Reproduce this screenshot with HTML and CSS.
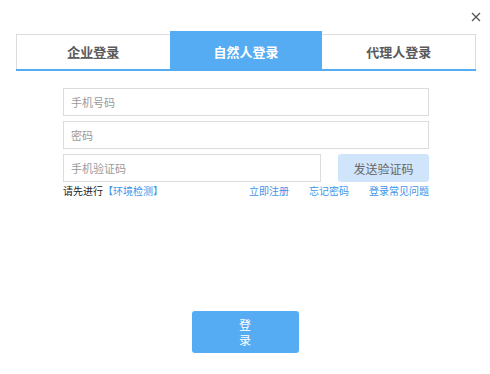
FILE: index.html
```html
<!DOCTYPE html>
<html lang="zh">
<head>
<meta charset="utf-8">
<title>登录</title>
<link rel="stylesheet" href="styles.css">
</head>
<body>
<div class="dialog">
  <button class="close" aria-label="关闭">
    <svg width="10" height="10" viewBox="0 0 10 10"><path d="M1 1L9 9M9 1L1 9" stroke="#555" stroke-width="1.3" fill="none"/></svg>
  </button>
  <div class="tabs">
    <div class="tab tab-first"><span class="hover">企业登录</span></div>
    <div class="tab active">自然人登录</div>
    <div class="tab tab-last">代理人登录</div>
  </div>
  <form class="form">
    <input class="field" type="text" placeholder="手机号码">
    <input class="field" type="password" placeholder="密码">
    <div class="code-row">
      <input class="field code" type="text" placeholder="手机验证码">
      <button type="button" class="send">发送验证码</button>
    </div>
    <div class="links">
      <span class="check">请先进行<a class="blue">【环境检测】</a></span>
      <span class="right">
        <a class="blue">立即注册</a>
        <a class="blue">忘记密码</a>
        <a class="blue">登录常见问题</a>
      </span>
    </div>
    <div class="submit-wrap">
      <button type="button" class="submit"><span class="stack">登录</span></button>
    </div>
  </form>
</div>
</body>
</html>
```

FILE: styles.css
```css
* { box-sizing: border-box; }
html, body {
  margin: 0;
  padding: 0;
  background: #fff;
  font-family: "Noto Sans CJK SC", "Noto Sans", sans-serif;
}
.dialog {
  position: relative;
  width: 490px;
  height: 374px;
  padding-top: 31px;
}
.close {
  position: absolute;
  left: 470px;
  top: 11px;
  width: 11px;
  height: 11px;
  padding: 0;
  border: 0;
  background: none;
  display: flex;
  align-items: center;
  justify-content: center;
}
.tabs {
  display: flex;
  align-items: flex-end;
  margin: 0 14px 0 16px;
  border-bottom: 2px solid #55acf2;
}
.tab {
  flex: 1;
  height: 35px;
  border-top: 1px solid #dcdcdc;
  font-size: 13px;
  font-weight: bold;
  color: #5a5a5a;
  display: flex;
  align-items: center;
  justify-content: center;
  padding-bottom: 1px;
}
.tab-first { border-left: 1px solid #dcdcdc; }
.tab-last { border-right: 1px solid #dcdcdc; }
.hover { text-decoration: underline; text-decoration-color: #999; }
.tab.active {
  height: 38px;
  border-top: 0;
  background: #55acf2;
  color: #fff;
  padding-top: 3px;
}
.form {
  width: 366px;
  margin: 17px 0 0 63px;
  display: flex;
  flex-direction: column;
  gap: 5px;
}
.field {
  width: 100%;
  height: 28px;
  border: 1px solid #dcdcdc;
  padding: 0 7px;
  font-family: inherit;
  font-size: 11px;
  color: #333;
  outline: none;
}
.field::placeholder { color: #9a9a9a; }
.code-row {
  display: flex;
  gap: 17px;
}
.field.code { width: 258px; flex: none; }
.send {
  flex: 1;
  height: 28px;
  border: 0;
  border-radius: 3px;
  background: #d0e5fb;
  color: #666;
  font-family: inherit;
  font-size: 12px;
  padding: 0;
}
.links {
  display: flex;
  justify-content: space-between;
  font-size: 10px;
  line-height: 14px;
  color: #222;
  margin-top: -3px;
}
.blue { color: #3e94e8; }
.right { display: flex; gap: 20px; }
.submit-wrap {
  display: flex;
  justify-content: center;
  margin-top: 108px;
  padding-right: 2px;
}
.submit {
  width: 107px;
  height: 42px;
  border: 0;
  border-radius: 3px;
  background: #55acf2;
  color: #fff;
  font-family: inherit;
  font-size: 12px;
  padding: 0;
  display: flex;
  align-items: center;
  justify-content: center;
}
.stack {
  display: block;
  width: 12px;
  line-height: 15px;
  word-break: break-all;
}
```
